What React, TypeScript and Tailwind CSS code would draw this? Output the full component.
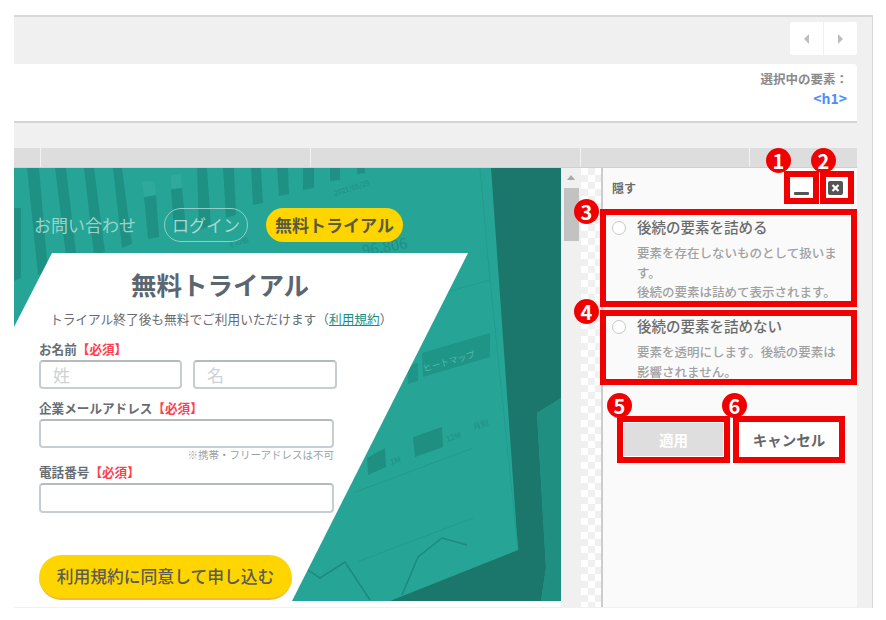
import type { ReactNode } from "react";

function Badge({ n, className }: { n: number; className: string }) {
  return (
    <span className={`absolute z-10 flex h-[25px] w-[25px] items-center justify-center rounded-full bg-[#f00000] text-[20px] leading-none font-bold text-white ${className}`}>
      {n}
    </span>
  );
}

function Required() {
  return <span className="text-[#ff3d4d]">【必須】</span>;
}

function Label({ children, className = "" }: { children: ReactNode; className?: string }) {
  return <div className={`h-4 text-[12.6px] leading-4 font-bold text-[#666d73] ${className}`}>{children}</div>;
}

function Field({ placeholder, className }: { placeholder?: string; className: string }) {
  return (
    <input
      placeholder={placeholder}
      className={`block rounded-[4px] border-2 border-[#c6ced4] border-t-[#b5babd] bg-white px-3 text-[17px] placeholder:text-[#ccd2d6] ${className}`}
    />
  );
}

function Option({ title, badge, badgeClass, boxClass, children }: { title: string; badge: number; badgeClass: string; boxClass: string; children: ReactNode }) {
  return (
    <div className={`relative -ml-[3px] w-[257px] border-[6px] border-[#f00000] pl-[6px] ${boxClass}`}>
      <Badge n={badge} className={badgeClass} />
      <div className="flex items-start gap-[11px]">
        <span className="mt-[4px] h-[14px] w-[14px] shrink-0 rounded-full border border-[#c8c8c8] bg-white" />
        <div className="pr-2">
          <div className="h-5 text-[14.5px] leading-5 font-medium text-[#6b6b6b]">{title}</div>
          <div className="mt-[6px] text-[12.5px] leading-[19.5px] font-medium text-[#a0a0a0]">{children}</div>
        </div>
      </div>
    </div>
  );
}

function HeroArt() {
  const bars = [
    [0, 40, 7, 40, 7, 110, 0, 113],
    [13, 0, 25, 0, 34, 104, 24, 107],
    [41, 0, 52, 0, 62, 85, 52, 88],
    [70, 0, 80, 0, 91, 84, 80, 87],
    [99, 0, 108, 0, 118, 76, 108, 80],
    [130, 29, 142, 27, 145, 69, 134, 71],
    [157, 21, 168, 20, 172, 60, 160, 62],
    [183, 0, 193, 0, 197, 58, 185, 62],
    [209, 0, 220, 0, 222, 47, 212, 50],
    [237, 0, 247, 0, 249, 35, 239, 37],
    [263, 0, 274, 0, 275, 26, 265, 28],
    [289, 0, 300, 0, 300, 20, 289, 22],
    [316, 0, 326, 0, 326, 12, 316, 13],
    [343, 0, 351, 0, 351, 5, 343, 6],
  ];
  return (
    <svg viewBox="0 0 547 433" className="absolute inset-0 h-full w-full">
      <rect width="547" height="433" fill="#26a597" />
      {bars.map((b, i) => (
        <polygon key={i} points={b.join(",")} fill="#1f9184" />
      ))}
      <polygon points="128,14 140,13 142,27 130,29" fill="#2fa99b" />
      <polygon points="157,7 167,6 168,20 157,21" fill="#2fa99b" />
      <polygon points="477,0 547,0 547,230 523,245 532,400 527,433 376,433 504,382" fill="#1b776c" />
      <polygon points="523,245 547,230 547,433 527,433 532,400" fill="#1f8f82" />
      <polyline points="466,0 476,112 504,382" fill="none" stroke="#229b8d" />
      <line x1="433" y1="124" x2="476" y2="112" stroke="#229b8d" />
      <line x1="339" y1="325" x2="459" y2="280" stroke="#219b8d" />
      <line x1="343" y1="394" x2="459" y2="350" stroke="#219b8d" />
      <polygon points="393,198 404,195 404,213 394,216" fill="#1f9587" />
      <polygon points="408,185 476,165 476,189 409,209" fill="#1f9587" />
      <polygon points="353,290 371,280 372,299 354,307" fill="#1f8f82" />
      <polygon points="399,269 428,259 429,279 401,289" fill="#1f8f82" />
      <polyline points="294,402 306,410 331,394 356,432" fill="none" stroke="#1d8a7d" strokeWidth="1.5" />
      <polyline points="388,427 404,389 428,370 453,377" fill="none" stroke="#1d8a7d" strokeWidth="1.5" />
      <g fontSize="8" fill="#1d8f81">
        <text x="377" y="297" transform="rotate(-18 377 297)">1M</text>
        <text x="433" y="274" transform="rotate(-18 433 274)">12M</text>
        <text x="460" y="262" transform="rotate(-18 460 262)">月別</text>
        <text x="321" y="28" fontSize="7" transform="rotate(-18 321 28)">2021/05/29</text>
        <text x="215" y="80" fontSize="7" transform="rotate(-18 215 80)">その他</text>
      </g>
      <text x="410" y="204" fontSize="9" fill="#55b8ab" transform="rotate(-16 410 204)">ヒートマップ</text>
      <text x="349" y="88" fontSize="15" fill="#1f8f82" transform="rotate(-10 349 88)">96,806</text>
    </svg>
  );
}

export default function App() {
  return (
    <div className="h-[620px] w-[886px] overflow-hidden bg-white pt-[15px] pb-[12px] pl-[14px] pr-[13px] font-['Noto_Sans_CJK_JP','Noto_Sans',sans-serif]">
      <div className="h-[593px] border-t-2 border-r border-[#d8d8d8] bg-[#f0f0f0] pr-[15px]">
        <div className="flex h-[47px] items-start justify-end pt-[5px]">
          <div className="flex h-[33px] w-[67px] gap-px">
            <button className="flex flex-1 items-center justify-center rounded-l-[3px] bg-white">
              <span className="h-0 w-0 border-y-[5px] border-r-[5px] border-y-transparent border-r-[#bdbdbd]" />
            </button>
            <button className="flex flex-1 items-center justify-center rounded-r-[3px] bg-white">
              <span className="h-0 w-0 border-y-[5px] border-l-[5px] border-y-transparent border-l-[#bdbdbd]" />
            </button>
          </div>
        </div>
        <div className="flex h-[59px] flex-col items-end rounded-tr-[4px] border-b-2 border-[#d4d4d4] bg-white pt-[6px] pr-[9px] font-bold">
          <div className="text-[12.5px] leading-[18px] text-[#8a8a8a]">選択中の要素：</div>
          <div className="pr-px text-[14px] leading-[20px] text-[#4d8dff]">&lt;h1&gt;</div>
        </div>
        <div className="h-[25px]" />
        <div className="grid h-[20px] grid-cols-[27px_270px_270px_169px_1fr] border-b border-[#cfcfcf] bg-[#dddddd]">
          <div className="border-r border-[#f2f2f2]" />
          <div className="border-r border-[#f2f2f2]" />
          <div className="border-r border-[#f2f2f2]" />
          <div className="border-r border-[#f2f2f2]" />
          <div />
        </div>
        <div className="flex h-[439px]">
          <div className="w-[547px] bg-white">
            <div className="relative h-[433px] overflow-hidden">
              <HeroArt />
              <div className="relative flex h-[85px] items-start pt-[40px] pl-[20px]">
                <span className="mt-[6px] text-[17px] leading-[22px] text-[#9bd3cc]">お問い合わせ</span>
                <span className="ml-[28px] flex h-[34px] w-[84px] items-center justify-center rounded-full border border-[#8fd0c8] text-[17px] text-[#a5d9d2]">ログイン</span>
                <span className="ml-[18px] flex h-[34px] w-[137px] items-center justify-center rounded-full bg-[#ffd500] text-[17px] font-bold text-[#5b5a3f]">無料トライアル</span>
              </div>
              <div className="relative h-[348px] w-[454px] bg-white pl-[25px] [clip-path:polygon(38px_0,100%_0,278px_100%,0_100%,0_74px)]">
                <div className="h-[48px] w-[362px] pt-[15px] text-center text-[25.5px] leading-[32px] font-bold text-[#5a6670]">無料トライアル</div>
                <div className="mt-[8px] ml-[11px] h-5 text-[12.7px] leading-5 whitespace-nowrap text-[#666c72]">
                  トライアル終了後も無料でご利用いただけます（<span className="text-[#168f82] underline">利用規約</span>）
                </div>
                <Label className="mt-[12px]">お名前<Required /></Label>
                <div className="mt-[3px] flex gap-[11px]">
                  <Field placeholder="姓" className="h-[29px] w-[143px]" />
                  <Field placeholder="名" className="h-[29px] w-[144px]" />
                </div>
                <Label className="mt-[11px]">企業メールアドレス<Required /></Label>
                <Field className="mt-[3px] h-[29px] w-[295px]" />
                <div className="h-[14px] w-[295px] text-right text-[10.5px] leading-[14px] text-[#9a9fa3]">※携帯・フリーアドレスは不可</div>
                <Label className="mt-[2px]">電話番号<Required /></Label>
                <Field className="mt-[3px] h-[30px] w-[295px]" />
                <button className="mt-[42px] h-[45px] w-[253px] rounded-full border-b-2 border-[#f5b82e] bg-[#ffd500] text-[16.8px] font-medium text-[#5c5c52]">利用規約に同意して申し込む</button>
              </div>
            </div>
          </div>
          <div className="relative w-5 bg-[#f0f0f0]">
            <span className="absolute top-[7px] left-[6px] h-0 w-0 border-x-[4px] border-b-[5px] border-x-transparent border-b-[#a8a8a8]" />
            <div className="ml-[3px] h-[53px] w-[15px] translate-y-[20px] bg-[#c2c2c2]" />
          </div>
          <div className="w-5 bg-[conic-gradient(#f0f0f0_25%,#ffffff_0_50%,#f0f0f0_0_75%,#ffffff_0)] bg-[length:14px_14px]" />
          <div className="w-[256px] border-l-2 border-[#cccccc] bg-[#fafafa]">
            <div className="flex h-[41px] items-start pt-[3px] pl-[9px]">
              <span className="mt-[8px] text-[12px] leading-[18px] font-bold text-[#6b6b6b]">隠す</span>
              <div className="relative ml-auto h-[33px] w-[35px] border-[6px] border-[#f00000] bg-white">
                <Badge n={1} className="-top-[29px] -left-[24px]" />
                <span className="absolute top-[15px] left-[4px] h-[3px] w-[15px] rounded-[1px] bg-[#555555]" />
              </div>
              <div className="relative mr-[3px] ml-px h-[33px] w-[34px] border-[6px] border-[#f00000] bg-white">
                <Badge n={2} className="-top-[29px] -left-[15px]" />
                <svg viewBox="0 0 15 14" className="absolute top-[4px] left-[2px] h-[14px] w-[15px]">
                  <rect width="15" height="14" rx="2" fill="#555555" />
                  <path d="M4.5 4 10.5 10M10.5 4 4.5 10" stroke="#ffffff" strokeWidth="2.2" />
                </svg>
              </div>
            </div>
            <Option title="後続の要素を詰める" badge={3} badgeClass="-top-[16px] -left-[32px]" boxClass="h-[98px] pt-[2px]">
              要素を存在しないものとして扱います。<br />後続の要素は詰めて表示されます。
            </Option>
            <Option title="後続の要素を詰めない" badge={4} badgeClass="-top-[17px] -left-[32px]" boxClass="mt-[3px] h-[75px]">
              要素を透明にします。後続の要素は影響されません。
            </Option>
            <div className="mt-[31px] ml-[14px] flex gap-[3px]">
              <div className="relative h-[47px] w-[113px] border-[6px] border-[#f00000] bg-white p-px">
                <Badge n={5} className="-top-[29px] -left-[16px]" />
                <button className="h-full w-full bg-[#dedede] text-[14.5px] font-bold text-white">適用</button>
              </div>
              <div className="relative h-[47px] w-[112px] border-[6px] border-[#f00000]">
                <Badge n={6} className="-top-[29px] -left-[17px]" />
                <button className="h-full w-full bg-white text-[14.5px] font-bold text-[#666666]">キャンセル</button>
              </div>
            </div>
          </div>
        </div>
      </div>
    </div>
  );
}
